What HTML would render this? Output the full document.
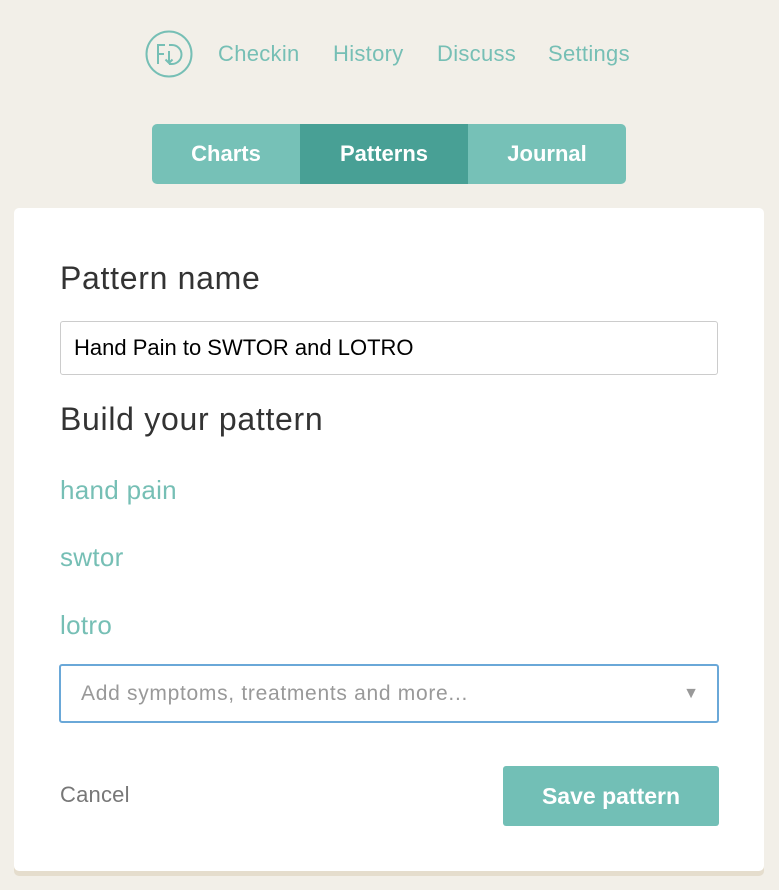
<!DOCTYPE html>
<html><head><style>
body{margin:0;width:779px;height:890px;background:#f2efe8;font-family:"Liberation Sans",sans-serif;position:relative;overflow:hidden}
.a{position:absolute}
.nav{top:40px;font-size:22px;color:#76bfb5;line-height:28px;letter-spacing:0.3px}
.tab{top:124px;height:60px;line-height:60px;color:#fff;font-weight:bold;font-size:22px;text-align:center}
.card{left:14px;top:208px;width:750px;height:663px;background:#fff;border-radius:5px;box-shadow:0 5px 0 #e5ddcd}
h{position:absolute;font-size:32px;color:#333;left:60px;letter-spacing:0.7px}
.it{left:60px;font-size:26px;color:#76bfb5;letter-spacing:0.3px}
</style></head><body>
<svg class="a" style="left:145px;top:30px" width="48" height="48"><circle cx="24" cy="24" r="22.5" fill="none" stroke="#76bfb5" stroke-width="2"/><path d="M20 15h-7v19M13 24h6M24 15h3a9.5 9.5 0 0 1 0 19h-3M24 21v12m-3.5-3.5l3.5 3.5 3.5-3.5" fill="none" stroke="#76bfb5" stroke-width="2"/></svg>
<div class="a nav" style="left:218px">Checkin</div>
<div class="a nav" style="left:333px">History</div>
<div class="a nav" style="left:437px">Discuss</div>
<div class="a nav" style="left:548px">Settings</div>
<div class="a tab" style="left:152px;width:148px;background:#76c1b7;border-radius:5px 0 0 5px">Charts</div>
<div class="a tab" style="left:300px;width:168px;background:#48a095">Patterns</div>
<div class="a tab" style="left:468px;width:158px;background:#76c1b7;border-radius:0 5px 5px 0">Journal</div>
<div class="a card"></div>
<h style="top:260px">Pattern name</h>
<div class="a" style="left:60px;top:321px;width:656px;height:52px;border:1px solid #ccc;border-radius:3px;font-size:22px;line-height:52px"><span style="margin-left:13px">Hand Pain to SWTOR and LOTRO</span></div>
<h style="top:401px">Build your pattern</h>
<div class="a it" style="top:475px">hand pain</div>
<div class="a it" style="top:542px">swtor</div>
<div class="a it" style="top:610px">lotro</div>
<div class="a" style="left:59px;top:664px;width:656px;height:55px;border:2px solid #6aa8d8;border-radius:3px;font-size:21px;line-height:55px;color:#999"><span style="margin-left:20px;letter-spacing:0.7px">Add symptoms, treatments and more...</span><span style="position:absolute;right:18px;font-size:16px">▼</span></div>
<div class="a" style="left:60px;top:782px;font-size:22px;color:#777;letter-spacing:0.2px">Cancel</div>
<div class="a" style="left:503px;top:766px;width:216px;height:60px;background:#72bfb6;border-radius:3px;color:#fff;font-weight:bold;font-size:23px;line-height:60px;text-align:center">Save pattern</div>
</body></html>
